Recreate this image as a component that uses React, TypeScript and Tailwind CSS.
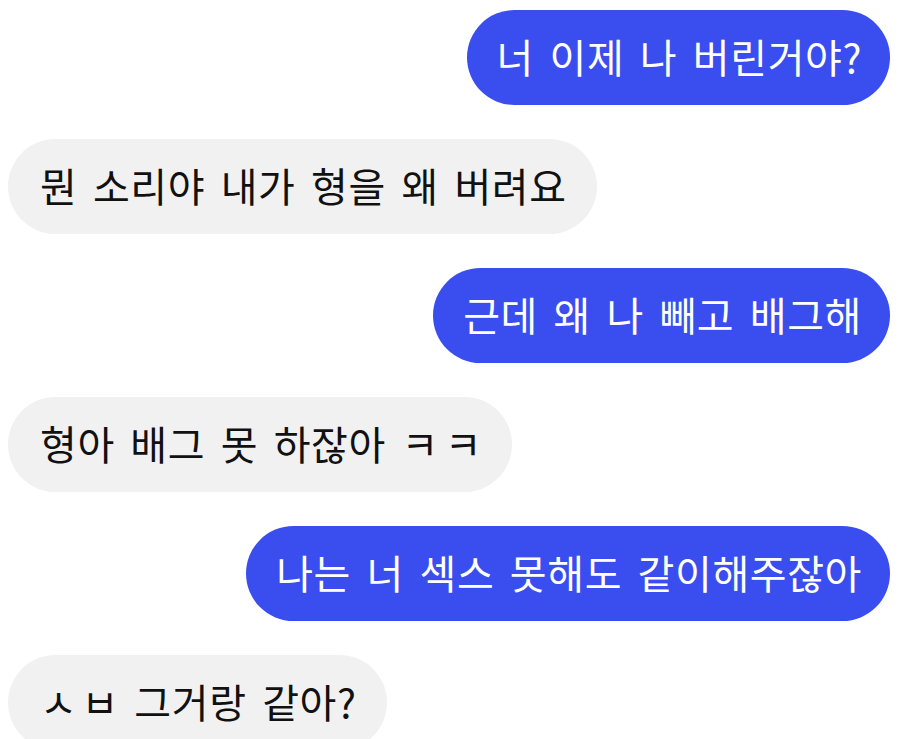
import React from "react";

const msgs: { me: boolean; text: React.ReactNode }[] = [
  { me: true, text: "너 이제 나 버린거야?" },
  { me: false, text: "뭔 소리야 내가 형을 왜 버려요" },
  { me: true, text: "근데 왜 나 빼고 배그해" },
  {
    me: false,
    text: (
      <>
        형아 배그 못 하잖아 <span className="mr-[6px]">ㅋ</span>ㅋ
      </>
    ),
  },
  { me: true, text: "나는 너 섹스 못해도 같이해주잖아" },
  {
    me: false,
    text: (
      <>
        <span className="mr-[4px]">ㅅ</span>ㅂ 그거랑 같아?
      </>
    ),
  },
];

export default function App() {
  return (
    <div
      className="w-[900px] h-[739px] overflow-hidden bg-white flex flex-col gap-[34px] pt-[10px] pl-[8px] pr-[10px]"
      style={{ fontFamily: '"Noto Sans CJK KR", "Noto Sans", sans-serif' }}
    >
      {msgs.map((m, i) => (
        <div key={i} className={m.me ? "flex justify-end" : "flex justify-start"}>
          <div
            className={
              m.me
                ? "h-[95px] shrink-0 rounded-full bg-[#3a4ef0] text-white pl-[30px] pr-[28px] pb-[4px] flex items-center text-[40px] tracking-[0.6px] whitespace-nowrap [word-spacing:6px]"
                : "h-[95px] shrink-0 rounded-full bg-[#f1f1f1] text-[#111] pl-[32px] pr-[30px] pb-[4px] flex items-center text-[40px] tracking-[0.6px] whitespace-nowrap [word-spacing:6px]"
            }
          >
            <span>{m.text}</span>
          </div>
        </div>
      ))}
    </div>
  );
}
